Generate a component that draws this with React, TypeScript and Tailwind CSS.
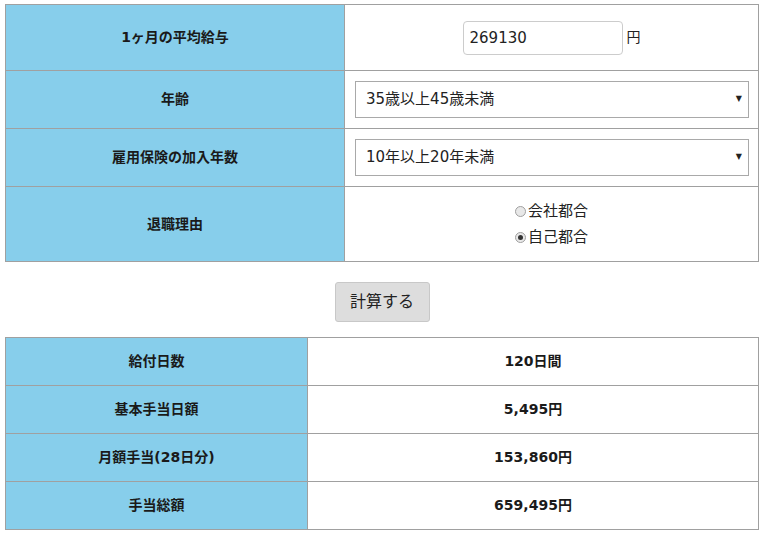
import { useState } from "react";

// Verdana-like Latin (DejaVu) with a Japanese fallback, close to Meiryo
const FONT = { fontFamily: '"DejaVu Sans", "Noto Sans CJK JP", sans-serif' };

const AGES = ["30歳未満", "30歳以上35歳未満", "35歳以上45歳未満", "45歳以上60歳未満", "60歳以上65歳未満"];
const YEARS = ["1年未満", "1年以上5年未満", "5年以上10年未満", "10年以上20年未満", "20年以上"];

const RESULTS: [string, string][] = [
  ["給付日数", "120日間"],
  ["基本手当日額", "5,495円"],
  ["月額手当(28日分)", "153,860円"],
  ["手当総額", "659,495円"],
];

function Label({ children, w }: { children: React.ReactNode; w: string }) {
  return (
    <div
      className={`${w} shrink-0 flex items-center justify-center bg-[#87ceeb] border-r border-[#a0a0a0] text-[14px] font-bold text-[#1a1a1a]`}
    >
      {children}
    </div>
  );
}

function Select({ value, options, onChange }: { value: string; options: string[]; onChange: (v: string) => void }) {
  return (
    <div className="relative w-full">
      <select
        value={value}
        onChange={(e) => onChange(e.target.value)}
        className="appearance-none w-full h-[37px] border border-[#a9a9a9] bg-white pl-[10px] text-[15px] text-[#222] outline-none"
        style={FONT}
      >
        {options.map((o) => (
          <option key={o}>{o}</option>
        ))}
      </select>
      <span className="pointer-events-none absolute right-[7px] top-[12px] text-[8px] text-[#222]">▼</span>
    </div>
  );
}

function Radio({ checked, label, onClick }: { checked: boolean; label: string; onClick: () => void }) {
  return (
    <label className="flex items-center h-[26px] cursor-pointer" onClick={onClick}>
      <span className="w-[11px] h-[11px] rounded-full border border-[#a0a0a0] bg-[#e8e8e8] flex items-center justify-center mr-[2px]">
        {checked && <span className="w-[5px] h-[5px] rounded-full bg-[#333]" />}
      </span>
      <span className="text-[15px] text-[#222]">{label}</span>
    </label>
  );
}

export default function App() {
  const [salary, setSalary] = useState("269130");
  const [age, setAge] = useState(AGES[2]);
  const [years, setYears] = useState(YEARS[3]);
  const [reason, setReason] = useState<"company" | "self">("self");

  return (
    <div className="min-h-[545px] bg-white pt-[4px] pl-[5px]" style={FONT}>
      <div className="w-[754px] border-t border-l border-[#a0a0a0]">
        <div className="flex h-[66px] border-b border-[#a0a0a0]">
          <Label w="w-[339px]">1ヶ月の平均給与</Label>
          <div className="flex-1 flex items-center justify-center border-r border-[#a0a0a0]">
            <input
              value={salary}
              onChange={(e) => setSalary(e.target.value)}
              className="w-[160px] h-[34px] border border-[#cccccc] rounded-[4px] px-[6px] text-[15px] text-[#222] outline-none"
              style={FONT}
            />
            <span className="ml-[4px] text-[14px] text-[#222]">円</span>
          </div>
        </div>
        <div className="flex h-[58px] border-b border-[#a0a0a0]">
          <Label w="w-[339px]">年齢</Label>
          <div className="flex-1 flex items-center pl-[10px] pr-[9px] border-r border-[#a0a0a0]">
            <Select value={age} options={AGES} onChange={setAge} />
          </div>
        </div>
        <div className="flex h-[58px] border-b border-[#a0a0a0]">
          <Label w="w-[339px]">雇用保険の加入年数</Label>
          <div className="flex-1 flex items-center pl-[10px] pr-[9px] border-r border-[#a0a0a0]">
            <Select value={years} options={YEARS} onChange={setYears} />
          </div>
        </div>
        <div className="flex h-[75px] border-b border-[#a0a0a0]">
          <Label w="w-[339px]">退職理由</Label>
          <div className="flex-1 flex flex-col items-center justify-center border-r border-[#a0a0a0]">
            <Radio checked={reason === "company"} label="会社都合" onClick={() => setReason("company")} />
            <Radio checked={reason === "self"} label="自己都合" onClick={() => setReason("self")} />
          </div>
        </div>
      </div>

      <div className="w-[754px] flex justify-center mt-[20px] mb-[15px]">
        <button className="w-[95px] h-[40px] bg-[#dddddd] border border-[#c8c8c8] rounded-[3px] text-[16px] text-[#222]">
          計算する
        </button>
      </div>

      <div className="w-[754px] border-t border-l border-[#a0a0a0]">
        {RESULTS.map(([k, v]) => (
          <div key={k} className="flex h-[48px] border-b border-[#a0a0a0]">
            <Label w="w-[302px]">{k}</Label>
            <div className="flex-1 flex items-center justify-center border-r border-[#a0a0a0] text-[14px] font-bold text-[#1a1a1a]">
              {v}
            </div>
          </div>
        ))}
      </div>
    </div>
  );
}
